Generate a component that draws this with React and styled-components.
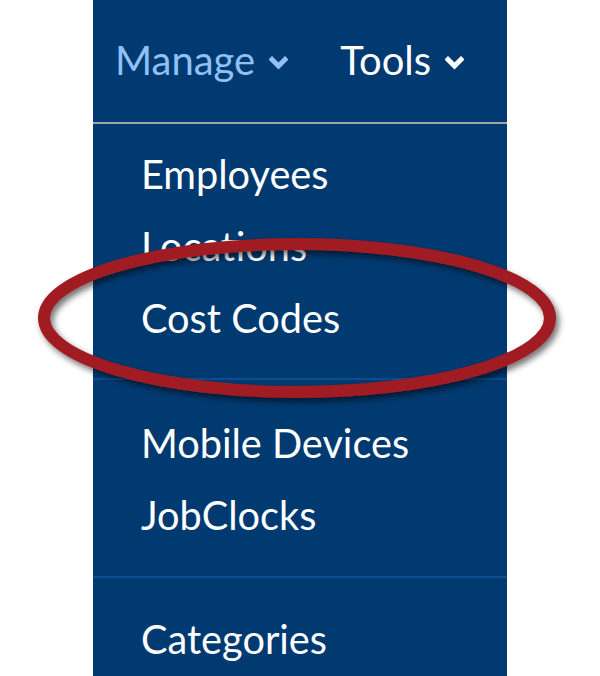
import React from 'react';
import styled, { createGlobalStyle } from 'styled-components';

const GlobalStyle = createGlobalStyle`
  html, body {
    margin: 0;
    padding: 0;
    background: #ffffff;
  }
  body {
    font-family: Lato, 'Open Sans', sans-serif;
  }
`;

const Page = styled.div`
  position: relative;
  width: 600px;
  height: 676px;
  overflow: hidden;
  background: #ffffff;
`;

const Panel = styled.div`
  margin-left: 93px;
  width: 414px;
  height: 676px;
  background: #003a71;
  display: flex;
  flex-direction: column;
`;

const Nav = styled.nav`
  height: 124px;
  box-sizing: border-box;
  padding: 35px 0 0 22px;
  display: flex;
  align-items: flex-start;
  gap: 52px;
  border-bottom: 2px solid #a4a4a4;
`;

const NavItem = styled.div`
  display: flex;
  align-items: center;
  gap: 14px;
  font-size: 40px;
  line-height: 50px;
  color: ${({ active }) => (active ? '#8fc1f7' : '#ffffff')};
  & svg {
    margin-top: 6px;
  }
`;

const Group = styled.ul`
  list-style: none;
  margin: 0;
  padding: ${({ top }) => top}px 0 ${({ bottom }) => bottom}px 48px;
  border-bottom: ${({ last }) => (last ? 'none' : '2px solid #0a4d92')};
`;

const Item = styled.li`
  font-size: 39.7px;
  line-height: 72px;
  color: #ffffff;
  white-space: nowrap;
`;

const Highlight = styled.svg`
  position: absolute;
  left: 0;
  top: 0;
  pointer-events: none;
`;

function Chevron({ color }) {
  return (
    <svg width="19" height="14" viewBox="0 0 19 14">
      <path
        d="M3 3.5 L9.5 10 L16 3.5"
        fill="none"
        stroke={color}
        strokeWidth="5"
        strokeLinecap="square"
        strokeLinejoin="miter"
      />
    </svg>
  );
}

const groups = [
  { top: 14, bottom: 24, items: ['Employees', 'Locations', 'Cost Codes'] },
  { top: 27, bottom: 25, items: ['Mobile Devices', 'JobClocks'] },
  { top: 25, bottom: 0, items: ['Categories'], last: true },
];

export default function App() {
  return (
    <Page>
      <GlobalStyle />
      <Panel>
        <Nav>
          <NavItem active>
            Manage
            <Chevron color="#8fc1f7" />
          </NavItem>
          <NavItem>
            Tools
            <Chevron color="#ffffff" />
          </NavItem>
        </Nav>
        {groups.map((g, i) => (
          <Group key={i} top={g.top} bottom={g.bottom} last={g.last}>
            {g.items.map((label) => (
              <Item key={label}>{label}</Item>
            ))}
          </Group>
        ))}
      </Panel>
      <Highlight width="600" height="676" viewBox="0 0 600 676">
        <defs>
          <filter id="ringShadow" x="-10%" y="-30%" width="120%" height="160%">
            <feDropShadow dx="3" dy="4" stdDeviation="3" floodColor="#000" floodOpacity="0.55" />
          </filter>
        </defs>
        <ellipse
          cx="297"
          cy="318"
          rx="253"
          ry="74"
          fill="none"
          stroke="#a11a22"
          strokeWidth="12"
          filter="url(#ringShadow)"
        />
      </Highlight>
    </Page>
  );
}
